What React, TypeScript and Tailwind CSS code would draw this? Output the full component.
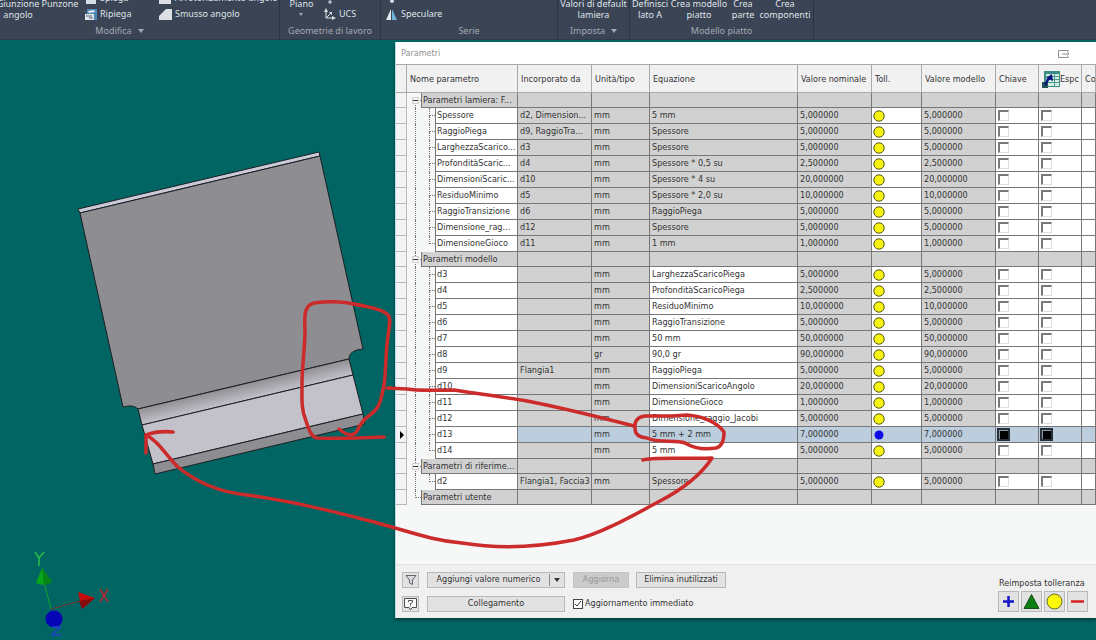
import type { ReactNode } from "react";
import { clsx } from "clsx";

type Row = {
  name: string;
  usedBy?: string;
  unit: string;
  equation: string;
  value: string;
  active?: boolean;
};

type Group = {
  title: string;
  locked?: boolean;
  rows: Row[];
};

const groups: Group[] = [
  {
    title: "Parametri lamiera: F...",
    locked: true,
    rows: [
      { name: "Spessore", usedBy: "d2, Dimension...", unit: "mm", equation: "5 mm", value: "5,000000" },
      { name: "RaggioPiega", usedBy: "d9, RaggioTra...", unit: "mm", equation: "Spessore", value: "5,000000" },
      { name: "LarghezzaScarico...", usedBy: "d3", unit: "mm", equation: "Spessore", value: "5,000000" },
      { name: "ProfonditàScaric...", usedBy: "d4", unit: "mm", equation: "Spessore * 0,5 su", value: "2,500000" },
      { name: "DimensioniScaric...", usedBy: "d10", unit: "mm", equation: "Spessore * 4 su", value: "20,000000" },
      { name: "ResiduoMinimo", usedBy: "d5", unit: "mm", equation: "Spessore * 2,0 su", value: "10,000000" },
      { name: "RaggioTransizione", usedBy: "d6", unit: "mm", equation: "RaggioPiega", value: "5,000000" },
      { name: "Dimensione_rag...", usedBy: "d12", unit: "mm", equation: "Spessore", value: "5,000000" },
      { name: "DimensioneGioco", usedBy: "d11", unit: "mm", equation: "1 mm", value: "1,000000" },
    ],
  },
  {
    title: "Parametri modello",
    rows: [
      { name: "d3", unit: "mm", equation: "LarghezzaScaricoPiega", value: "5,000000" },
      { name: "d4", unit: "mm", equation: "ProfonditàScaricoPiega", value: "2,500000" },
      { name: "d5", unit: "mm", equation: "ResiduoMinimo", value: "10,000000" },
      { name: "d6", unit: "mm", equation: "RaggioTransizione", value: "5,000000" },
      { name: "d7", unit: "mm", equation: "50 mm", value: "50,000000" },
      { name: "d8", unit: "gr", equation: "90,0 gr", value: "90,000000" },
      { name: "d9", usedBy: "Flangia1", unit: "mm", equation: "RaggioPiega", value: "5,000000" },
      { name: "d10", unit: "mm", equation: "DimensioniScaricoAngolo", value: "20,000000" },
      { name: "d11", unit: "mm", equation: "DimensioneGioco", value: "1,000000" },
      { name: "d12", unit: "mm", equation: "Dimensione_raggio_Jacobi", value: "5,000000" },
      { name: "d13", unit: "mm", equation: "5 mm + 2 mm", value: "7,000000", active: true },
      { name: "d14", unit: "mm", equation: "5 mm", value: "5,000000" },
    ],
  },
  {
    title: "Parametri di riferime...",
    locked: true,
    rows: [{ name: "d2", usedBy: "Flangia1, Faccia3", unit: "mm", equation: "Spessore", value: "5,000000" }],
  },
  { title: "Parametri utente", rows: [] },
];

function Panel({ title, menu, className, titleClass, children }: { title: string; menu?: boolean; className: string; titleClass?: string; children?: ReactNode }) {
  return (
    <section className={clsx("flex shrink-0 flex-col justify-end border-r border-[#2b3442]", className)}>
      <div className="flex shrink-0 items-end">{children}</div>
      <h2 className={clsx("flex h-[17px] shrink-0 items-center justify-center gap-1.5 text-[#a3a9b3]", titleClass)}>
        {title}
        {menu && <Caret />}
      </h2>
    </section>
  );
}

function Caret() {
  return (
    <svg viewBox="0 0 6 4" className="h-1 w-1.5 shrink-0" aria-hidden="true">
      <path d="M0 0h6L3 4z" fill="currentColor" />
    </svg>
  );
}

function BigTool({ className, children }: { className: string; children: ReactNode }) {
  return (
    <button type="button" className={clsx("mb-0.5 flex h-[22px] shrink-0 justify-center text-center leading-[11px] whitespace-nowrap", className)}>
      <span>{children}</span>
    </button>
  );
}

function SmallTool({ icon, label, children }: { icon: ReactNode; label?: string; children?: ReactNode }) {
  return (
    <button type="button" aria-label={label} className="flex h-4 items-center gap-[3px] whitespace-nowrap">
      <svg viewBox="0 0 13 13" className="h-[13px] w-[13px] shrink-0" aria-hidden="true">
        {icon}
      </svg>
      {children}
    </button>
  );
}

function Ribbon() {
  return (
    <header className="flex h-10 overflow-hidden border-b border-[#2a3c48] bg-[#3b4454] font-['Noto_Sans','Open_Sans',sans-serif] text-[9px] text-[#dfe3e8]">
      <Panel title="Modifica" menu className="w-[280px]" titleClass="pr-10">
        <BigTool className="w-9">Giunzione<br />angolo</BigTool>
        <BigTool className="w-12">Punzone<br />&nbsp;</BigTool>
        <div className="w-[75px]">
          <SmallTool icon={<path d="M2 3h7l3 5v4H2z" fill="#d5dde5" />}>Spiega</SmallTool>
          <SmallTool
            icon={
              <>
                <path d="M3 1h10v11H3z" fill="#4f87b5" />
                <path d="M4 3l6-1 1 2-6 1zM1 6h9v6H1z" fill="#e3e9ee" />
                <path d="M0 4h3M2 8h6M5 10h4" stroke="#54616f" />
              </>
            }
          >
            Ripiega
          </SmallTool>
        </div>
        <div>
          <SmallTool icon={<path d="M0 12V6Q1 1 7 0h5v12z" fill="#dcdfe3" />}>Arrotondamento angolo</SmallTool>
          <SmallTool icon={<path d="M0 12V8L7 1h6v11z" fill="#dcdfe3" />}>Smusso angolo</SmallTool>
        </div>
      </Panel>
      <Panel title="Geometrie di lavoro" className="w-[101px]">
        <BigTool className="w-[43px]">Piano<br /><span className="flex justify-center pt-1"><svg viewBox="0 0 4 3" className="h-[3px] w-1" aria-hidden="true"><path d="M0 0h4L2 3z" fill="#a3a9b3" /></svg></span></BigTool>
        <div>
          <SmallTool label="Punto" icon={<path d="M7 8v4M5 10h4" stroke="#dce1e6" />} />
          <SmallTool
            icon={
              <>
                <path d="M3 2v8h8M3 10l5-5" stroke="#dce1e6" fill="none" />
                <path d="M1 4l2-4 2 4zM9 8l4 2-4 2zM6 4h3v3z" fill="#dce1e6" />
              </>
            }
          >
            UCS
          </SmallTool>
        </div>
      </Panel>
      <Panel title="Serie" className="w-[177px]">
        <div className="pl-1">
          <SmallTool label="Circolare" icon={<circle cx="7" cy="9" r="2" fill="#c6dcec" />} />
          <SmallTool
            icon={
              <>
                <path d="M6 1v11H1z" fill="#e2ebf0" />
                <path d="M7 1v11h5z" fill="#6cb5d8" />
              </>
            }
          >
            Speculare
          </SmallTool>
        </div>
      </Panel>
      <Panel title="Imposta" menu className="w-[72px]">
        <BigTool className="w-full">Valori di default<br />lamiera</BigTool>
      </Panel>
      <Panel title="Modello piatto" className="w-[184px]">
        <BigTool className="w-10">Definisci<br />lato A</BigTool>
        <BigTool className="w-[58px]">Crea modello<br />piatto</BigTool>
        <BigTool className="w-[30px]">Crea<br />parte</BigTool>
        <BigTool className="w-[54px]">Crea<br />componenti</BigTool>
      </Panel>
    </header>
  );
}

function ModelView() {
  return (
    <svg viewBox="0 40 395 600" className="h-[600px] w-[395px] shrink-0" role="img" aria-label="Modello lamiera">
      <defs>
        <linearGradient id="bend" gradientUnits="userSpaceOnUse" x1="240" y1="384" x2="244" y2="401">
          <stop offset="0" stopColor="#8e8d91" />
          <stop offset="1" stopColor="#c3c2cb" />
        </linearGradient>
      </defs>
      <g stroke="#1c1f24" strokeWidth="1" strokeLinejoin="round">
        <path d="M78 209L319 152L320 156L80 213Z" fill="#c9cad6" />
        <path d="M80 213L320 156L363 349Q349 350 349 359L138 409Q133 404 123 407Z" fill="#8e8d91" />
        <path d="M138 409L349 359L353 375L142 425Z" fill="url(#bend)" />
        <path d="M142 425L353 375L363 414L153 464Z" fill="#c3c2cb" />
        <path d="M153 464L363 414L365 424L155 474Z" fill="#8e8d91" />
      </g>
      <path d="M51 609L44 582" stroke="#14a52c" />
      <path d="M51 609L80 601" stroke="#7b3030" />
      <path d="M42 568L36 583Q44 587 52 582Z" fill="#09a51a" />
      <path d="M42 568L44 585Q49 584 52 582Z" fill="#078516" />
      <path d="M78 592L95 598L82 609Z" fill="#c30d0d" />
      <path d="M79 601L95 598L82 609Z" fill="#860b0b" />
      <circle cx="54" cy="619" r="8.5" fill="#0505b5" />
      <g fill="none" strokeWidth="1.5">
        <path d="M35 552L39 558L44 552M39 558V566" stroke="#2bc04a" />
        <path d="M100 589L108 602M108 589L100 602" stroke="#b8292e" />
        <path d="M52 627H60L52 635H61" stroke="#1f3fd0" />
      </g>
    </svg>
  );
}

function CheckCell({ active, label }: { active?: boolean; label: string }) {
  return (
    <td className={clsx("pl-0.5", active ? "bg-[#bccddd]" : "bg-white")}>
      <input
        type="checkbox"
        aria-label={label}
        className={clsx(
          "block h-[11px] w-[11px] appearance-none border-t-2 border-r border-b border-l-2",
          active
            ? "border-[#8b98a4] bg-black outline-2 outline-[#27313b] -outline-offset-1"
            : "border-t-[#77797c] border-r-[#dedede] border-b-[#dedede] border-l-[#77797c] bg-white",
        )}
      />
    </td>
  );
}

function ParameterRow({ row, locked, last, moreGroups }: { row: Row; locked?: boolean; last: boolean; moreGroups: boolean }) {
  const fixed = row.active ? "bg-[#bccddd]" : "bg-[#d1d1d1]";
  const open = row.active ? "bg-[#bccddd]" : "bg-white";

  return (
    <tr className="h-4">
      <td className="border-[#b8b8b8]! bg-[#f2f3f4]">
        {row.active && (
          <svg viewBox="0 0 4 8" className="ml-0.5 h-2 w-1" aria-label="Riga corrente">
            <path d="M0 0l4 4-4 4z" />
          </svg>
        )}
      </td>
      <td className="border-b-0! bg-[#f6f7f7] p-0!">
        <div className="flex h-4">
          <div className="flex w-7 shrink-0 pl-2">
            <span className={clsx("w-[14px]", moreGroups && "border-l border-dotted border-[#777]")} />
            <span className="flex w-[6px] flex-col">
              <span className="h-2 border-b border-l border-dotted border-[#777]" />
              <span className={clsx("h-2", !last && "border-l border-dotted border-[#777]")} />
            </span>
          </div>
          <span className="min-w-0 flex-1 overflow-hidden border-b border-l border-[#777] bg-white pl-px leading-[15px]">{row.name}</span>
        </div>
      </td>
      <td className={fixed}>{row.usedBy}</td>
      <td className={fixed}>{row.unit}</td>
      <td className={locked ? fixed : open}>{row.equation}</td>
      <td className={fixed}>{row.value}</td>
      <td className={clsx("pl-px!", open)}>
        <svg viewBox="0 0 12 12" className="block h-3 w-3" aria-hidden="true">
          {row.active ? <circle cx="6" cy="6" r="4.5" fill="#0d0de8" /> : <circle cx="6" cy="6" r="5.2" fill="#f8f513" stroke="#55551c" />}
        </svg>
      </td>
      <td className={fixed}>{row.value}</td>
      <CheckCell active={row.active} label={`Chiave ${row.name}`} />
      <CheckCell active={row.active} label={`Esporta ${row.name}`} />
      <td className={open} />
    </tr>
  );
}

function GroupRows({ group, first, last }: { group: Group; first: boolean; last: boolean }) {
  const hasRows = group.rows.length > 0;
  return (
    <tbody>
      <tr className="h-[15px]">
        <td className="border-[#b8b8b8]! bg-[#f2f3f4]" />
        <td className="border-b-0! bg-[#f6f7f7] p-0!">
          <div className="flex h-[15px]">
            <div className="flex w-[14px] shrink-0 pl-2">
              <span className="flex w-[6px] flex-col">
                <span className={clsx("h-2 border-b border-dotted border-[#777]", !first && "border-l")} />
                <span className={clsx("h-[7px] border-dotted border-[#777]", !last && "border-l")} />
              </span>
            </div>
            {hasRows && (
              <button type="button" aria-label={`Comprimi ${group.title}`} className="mt-1 mr-[2px] -ml-[9px] flex h-[7px] w-[7px] items-center border border-[#d0d0d0] bg-[#f6f7f7]">
                <span className="h-px w-full bg-[#333]" />
              </button>
            )}
            <span className="min-w-0 flex-1 overflow-hidden border-b border-l border-[#777] bg-[#d1d1d1] pl-px leading-[14px]">{group.title}</span>
          </div>
        </td>
        {Array.from({ length: 9 }, (_, i) => (
          <td key={i} className="bg-[#d1d1d1]" />
        ))}
      </tr>
      {group.rows.map((row, i) => (
        <ParameterRow key={row.name} row={row} locked={group.locked} last={i === group.rows.length - 1} moreGroups={!last} />
      ))}
    </tbody>
  );
}

function ExportIcon() {
  return (
    <svg viewBox="0 0 18 18" className="h-[18px] w-[18px] shrink-0" aria-hidden="true">
      <path d="M2 0h16v16H2z" fill="#3c8f88" />
      <path d="M4 3h13v12H4z" fill="#d4ebdf" />
      <path d="M4 5.5h13M4 8.5h13M4 11.5h13M12.5 3v12" stroke="#4b9b91" />
      <path d="M0 11h6v6H0z" fill="#24545c" />
      <path d="M3 14l4-7" stroke="#0b1582" strokeWidth="2.5" />
      <path d="M4 7l6-4 1 7z" fill="#0b1582" />
    </svg>
  );
}

function ParameterTable() {
  return (
    <table className="w-full table-fixed border-separate border-spacing-0 [&_td]:overflow-hidden [&_td]:border-r [&_td]:border-b [&_td]:border-[#777] [&_td]:py-0 [&_td]:pr-0 [&_td]:pl-[2px] [&_td]:leading-[15px] [&_td]:whitespace-nowrap [&_th]:overflow-hidden [&_th]:border-r [&_th]:border-b [&_th]:border-[#aaa] [&_th]:px-0 [&_th]:pt-0.5 [&_th]:pb-0 [&_th]:pl-[3px] [&_th]:text-left [&_th]:font-normal [&_th]:whitespace-nowrap">
      <colgroup>
        <col className="w-[11px]" />
        <col className="w-[111px]" />
        <col className="w-[74px]" />
        <col className="w-[58px]" />
        <col />
        <col className="w-[74px]" />
        <col className="w-[50px]" />
        <col className="w-[74px]" />
        <col className="w-[43px]" />
        <col className="w-[43px]" />
        <col className="w-[14px]" />
      </colgroup>
      <thead className="bg-[#f1f1f2]">
        <tr className="h-7">
          <th />
          <th>Nome parametro</th>
          <th>Incorporato da</th>
          <th>Unità/tipo</th>
          <th>Equazione</th>
          <th>Valore nominale</th>
          <th>Toll.</th>
          <th>Valore modello</th>
          <th>Chiave</th>
          <th>
            <span className="flex items-center">
              <ExportIcon />
              Espc
            </span>
          </th>
          <th>Co</th>
        </tr>
      </thead>
      {groups.map((group, i) => (
        <GroupRows key={group.title} group={group} first={i === 0} last={i === groups.length - 1} />
      ))}
    </table>
  );
}

const plainButton = "flex items-center justify-center border border-[#b9b9b9] bg-[#e2e2e2]";

function Footer() {
  return (
    <footer className="flex h-[54px] items-end justify-between border-t border-[#e2e2e2] bg-[#f0f0f0] pr-2 pb-1.5 pl-1.5">
      <div className="grid grid-cols-[17px_138px_1fr] gap-x-2 gap-y-2">
        <button type="button" aria-label="Filtro" className={clsx(plainButton, "h-4")}>
          <svg viewBox="0 0 12 12" className="h-3 w-3" fill="#d9dbe0" stroke="#62656d">
            <path d="M1 1.5h10L7.5 6v4.5l-3-1.5V6z" />
          </svg>
        </button>
        <button type="button" className={clsx(plainButton, "h-4")}>
          <span className="flex-1">Aggiungi valore numerico</span>
          <span className="flex h-3 w-[15px] items-center justify-center border-l border-[#888]">
            <Caret />
          </span>
        </button>
        <div className="flex gap-[7px]">
          <button type="button" disabled className="h-4 w-14 border border-[#c4c4c4] bg-[#cbcbcb] text-[#979797]">
            Aggiorna
          </button>
          <button type="button" className={clsx(plainButton, "h-4 w-[90px]")}>
            Elimina inutilizzati
          </button>
        </div>
        <button type="button" aria-label="Guida" className={clsx(plainButton, "h-4")}>
          <svg viewBox="0 0 13 13" className="h-[13px] w-[13px]" fill="none" stroke="#4e4e4e">
            <path d="M.5.5h12v9H8L6.5 12 5 9.5H.5z" fill="#f8f8f8" />
            <path d="M4.500 4V2.500h4v2L6.500 5.500V7M6.500 7.500v1" />
          </svg>
        </button>
        <button type="button" className={clsx(plainButton, "h-4")}>
          Collegamento
        </button>
        <label className="flex items-center gap-0.5">
          <span className="grid">
            <input type="checkbox" defaultChecked className="col-start-1 row-start-1 h-2.5 w-2.5 appearance-none border border-[#444] bg-white" />
            <svg viewBox="0 0 10 10" className="pointer-events-none col-start-1 row-start-1 h-2.5 w-2.5" fill="none" stroke="#333">
              <path d="M2 5l2 2 4-5" />
            </svg>
          </span>
          Aggiornamento immediato
        </label>
      </div>
      <fieldset>
        <legend className="pl-px leading-3">Reimposta tolleranza</legend>
        <div className="mt-0.5 flex gap-0.5">
          <button type="button" aria-label="Superiore" className={clsx(plainButton, "h-[21px] w-[21px]")}>
            <svg viewBox="0 0 17 17" className="h-[17px] w-[17px]"><path d="M3 8.5h11M8.5 3v11" stroke="#1515c8" strokeWidth="2.5" /></svg>
          </button>
          <button type="button" aria-label="Media" className={clsx(plainButton, "h-[21px] w-[21px]")}>
            <svg viewBox="0 0 17 17" className="h-[17px] w-[17px]"><path d="M8.5 1.5l7.500 14H1z" fill="#0d7e12" stroke="#17501a" /></svg>
          </button>
          <button type="button" aria-label="Nominale" className={clsx(plainButton, "h-[21px] w-[21px]")}>
            <svg viewBox="0 0 17 17" className="h-[17px] w-[17px]"><circle cx="8.5" cy="8.5" r="7.5" fill="#fbf80a" stroke="#66662b" /></svg>
          </button>
          <button type="button" aria-label="Inferiore" className={clsx(plainButton, "h-[21px] w-[21px]")}>
            <svg viewBox="0 0 17 17" className="h-[17px] w-[17px]"><path d="M2 8.5h13" stroke="#d32222" strokeWidth="2.5" /></svg>
          </button>
        </div>
      </fieldset>
    </footer>
  );
}

function Markup() {
  return (
    <svg viewBox="0 0 1096 640" className="pointer-events-none absolute top-0 left-0 h-[640px] w-[1096px]" fill="none" stroke="#cb2b2a" strokeWidth="3.5" strokeLinecap="round" strokeLinejoin="round" aria-hidden="true">
      <path d="M364 306C344 301 326 301 314 303C305 305 304 314 305 330C305 348 302 366 302 383C302 399 301 409 306 421C309 430 311 437 317 438C340 439 363 438 384 437" />
      <path d="M354 304C368 307 382 309 388 315C392 319 388 331 387 345C385 365 386 379 383 390C380 405 378 409 370 415C363 420 360 424 357 431C353 438 345 434 339 429" />
      <path d="M387 388L407 389C420 391 432 390 454 390C479 394 503 397 527 401C563 408 599 417 634 426" />
      <path d="M672 416L645 416C637 417 634 422 635 428C635 435 639 437 647 438C657 443 675 440 685 443C695 449 704 450 716 448C724 446 724 436 724 432C717 422 702 416 687 415Z" />
      <path d="M643 460C651 457 673 459 712 458C701 475 681 490 660 501C636 514 601 534 574 540C533 548 499 549 462 543C428 540 406 530 366 520C331 511 292 501 247 495C218 492 196 482 178 467C166 456 160 442 146 435V453M146 435C154 432 163 431 173 432" />
    </svg>
  );
}

export default function App() {
  return (
    <div className="relative flex min-h-screen flex-col overflow-hidden bg-[#006563] font-['DejaVu_Sans_Condensed','DejaVu_Sans',sans-serif] text-[9px] text-[#333]">
      <Ribbon />
      <main className="flex flex-1 items-start">
        <ModelView />
        <section aria-label="Parametri" className="mt-0.5 flex min-w-0 flex-1 flex-col border-l border-[#b5dfe4] bg-[#f6f7f7] shadow-[0_2px_3px_rgba(0,0,0,0.4)]">
          <div className="flex h-[23px] items-center justify-between border-b border-[#a9a9a9] bg-white pt-0.5 pr-[26px] pl-[5px] text-[#929292]">
            <h1>Parametri</h1>
            <svg viewBox="0 0 12 8" className="h-2 w-3" fill="none" stroke="#8e8e8e" aria-hidden="true">
              <path d="M10 2V.5H.5v7H10V6M4 4h7M9.5 2.5L11 4L9.5 5.5" />
            </svg>
          </div>
          <ParameterTable />
          <div className="h-[59px]" />
          <Footer />
        </section>
      </main>
      <Markup />
    </div>
  );
}
